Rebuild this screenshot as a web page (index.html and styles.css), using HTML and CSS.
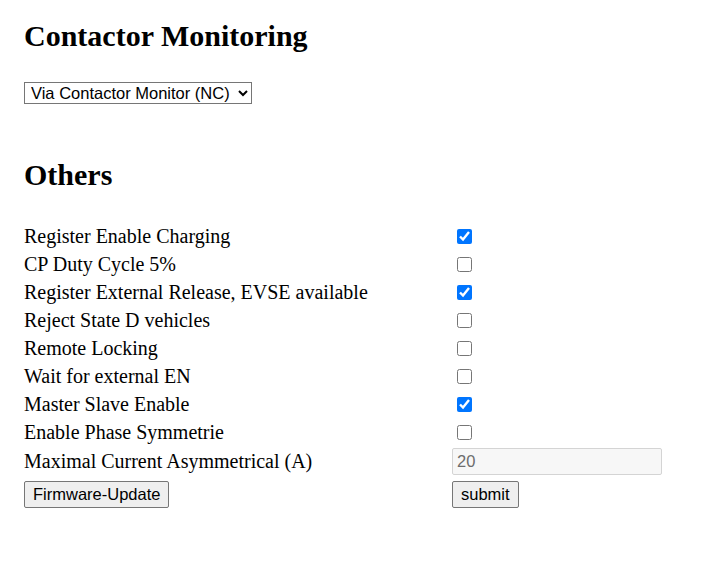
FILE: index.html
```html
<!DOCTYPE html>
<html>
<head>
<meta charset="utf-8">
<link rel="stylesheet" href="styles.css">
</head>
<body>
<div class="page">
  <h2 class="title">Contactor Monitoring</h2>
  <select class="sel">
    <option>Via Contactor Monitor (NC)</option>
  </select>
  <h2 class="title others">Others</h2>
  <table class="grid">
    <tr><td class="lbl">Register Enable Charging</td><td><input type="checkbox" checked></td></tr>
    <tr><td class="lbl">CP Duty Cycle 5%</td><td><input type="checkbox"></td></tr>
    <tr><td class="lbl">Register External Release, EVSE available</td><td><input type="checkbox" checked></td></tr>
    <tr><td class="lbl">Reject State D vehicles</td><td><input type="checkbox"></td></tr>
    <tr><td class="lbl">Remote Locking</td><td><input type="checkbox"></td></tr>
    <tr><td class="lbl">Wait for external EN</td><td><input type="checkbox"></td></tr>
    <tr><td class="lbl">Master Slave Enable</td><td><input type="checkbox" checked></td></tr>
    <tr><td class="lbl">Enable Phase Symmetrie</td><td><input type="checkbox"></td></tr>
    <tr class="tall"><td class="lbl">Maximal Current Asymmetrical (A)</td><td><input class="num" type="text" value="20" disabled></td></tr>
    <tr class="tall btnrow"><td><button class="btn">Firmware-Update</button></td><td><button class="btn">submit</button></td></tr>
  </table>
</div>
</body>
</html>
```
FILE: styles.css
```css
html, body {
  margin: 0;
  padding: 0;
  background: #fff;
}
.page {
  padding: 20px 24px;
  font-family: "Liberation Serif", "Times New Roman", serif;
  color: #000;
}
.title {
  font-size: 30px;
  font-weight: bold;
  margin: 0 0 30px 0;
  line-height: 32px;
}
.others {
  margin-top: 55px;
  margin-bottom: 31px;
}
.sel {
  font-family: "Liberation Sans", Arial, sans-serif;
  font-size: 16.5px;
  width: 228px;
  height: 22px;
  margin: 0;
  padding: 0 0 0 2px;
  border: 1px solid #767676;
  border-radius: 0;
  box-sizing: border-box;
  background: #fff;
  color: #000;
}
.grid {
  border-collapse: collapse;
  font-size: 20px;
}
.grid td {
  padding: 0;
  height: 28px;
  vertical-align: middle;
}
.grid .lbl {
  width: 428px;
}
.grid input[type=checkbox] {
  width: 15px;
  height: 15px;
  margin: 2px 3px 4px 5px;
  vertical-align: middle;
}
.grid tr.tall td {
  height: 31px;
}
.grid tr.btnrow td {
  padding-top: 2px;
}
.num {
  width: 210px;
  height: 27px;
  box-sizing: border-box;
  font-family: "Liberation Sans", Arial, sans-serif;
  font-size: 16.5px;
  margin: 0;
  padding: 1px 4px;
  border: 1px solid #d4d4d4;
  border-radius: 2px;
  background: #f7f7f7;
  color: #6d6d6d;
  vertical-align: middle;
}
.btn {
  font-family: "Liberation Sans", Arial, sans-serif;
  font-size: 16.5px;
  height: 27px;
  margin: 0;
  padding: 0 8px;
  border: 1px solid #767676;
  border-radius: 2px;
  background: #efefef;
  color: #000;
  vertical-align: middle;
}
```
